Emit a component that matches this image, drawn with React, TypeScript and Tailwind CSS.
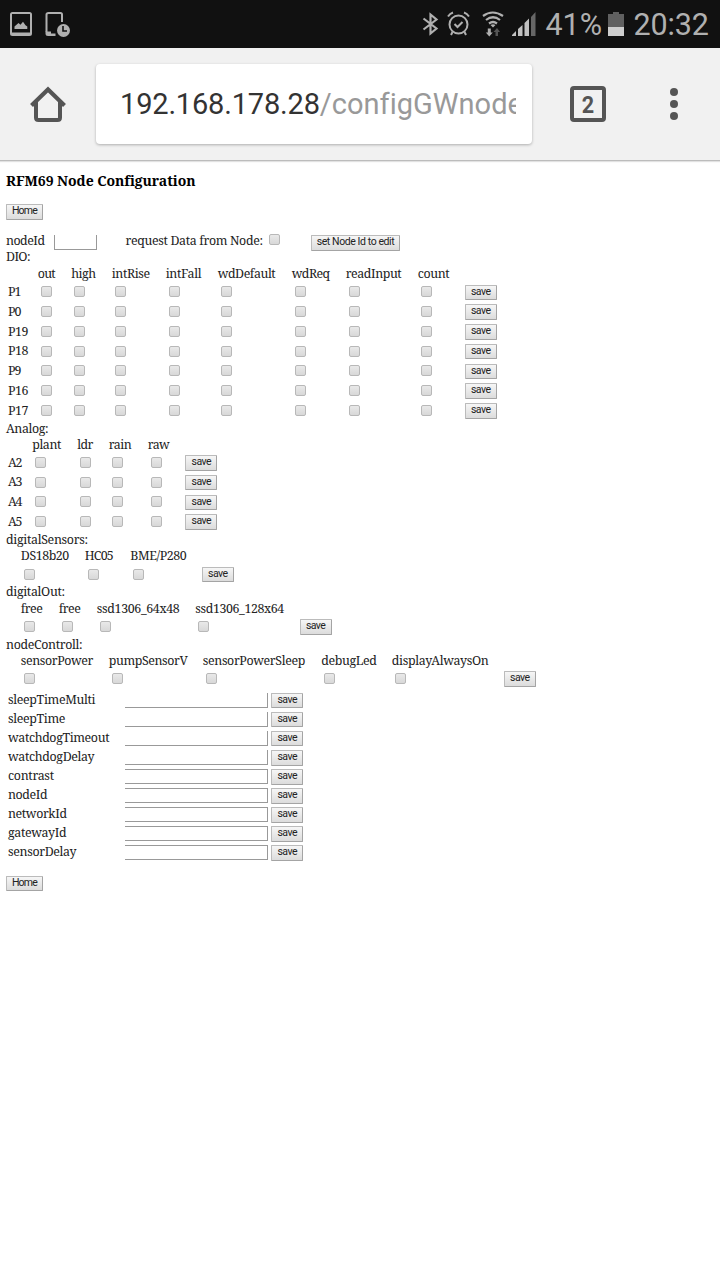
import { useLayoutEffect, useRef, useState } from "react";
import type { ReactNode } from "react";

/* Text that spreads its letters evenly to fill a given width. */
function Fit({ w, children, className = "" }: { w: number; children: string; className?: string }) {
  const ref = useRef<HTMLSpanElement>(null);
  const [spacing, setSpacing] = useState(0);
  useLayoutEffect(() => {
    if (!ref.current) return;
    const natural = ref.current.getBoundingClientRect().width - spacing * children.length;
    setSpacing((w - natural) / (children.length - 1));
  }, [w, children]);
  return (
    <span ref={ref} className={`inline-block whitespace-pre ${className}`} style={{ letterSpacing: `${spacing}px` }}>
      {children}
    </span>
  );
}

function Label({ w, children }: { w: number; children: string }) {
  return (
    <span className="block h-4 leading-4">
      <Fit w={w}>{children}</Fit>
    </span>
  );
}

function Check() {
  return (
    <input
      type="checkbox"
      className="block size-[11px] shrink-0 appearance-none rounded-[2px] border border-[#b8b8b8] bg-linear-to-b from-[#e9e9e9] to-[#d8d8d8]"
    />
  );
}

function Button({ children, className = "w-8", textWidth = 20 }: { children: string; className?: string; textWidth?: number }) {
  return (
    <button
      className={`flex h-[15.5px] shrink-0 justify-center rounded-[1px] border border-[#bbb] border-r-[#a4a4a4] border-b-[#a4a4a4] bg-linear-to-b from-[#f6f6f6] to-[#dcdcdc] font-[Roboto,sans-serif] text-[10.5px] leading-[12px] text-[#222] ${className}`}
    >
      <Fit w={textWidth}>{children}</Fit>
    </button>
  );
}

type Col = { name: string; w: number; cell: string };

const dio: Col[] = [
  { name: "out", w: 18, cell: "w-[33.5px]" },
  { name: "high", w: 25, cell: "w-[40.5px]" },
  { name: "intRise", w: 38.5, cell: "w-[54px]" },
  { name: "intFall", w: 36, cell: "w-[52px]" },
  { name: "wdDefault", w: 58, cell: "w-[74px]" },
  { name: "wdReq", w: 38.5, cell: "w-[54px]" },
  { name: "readInput", w: 56, cell: "w-[72px]" },
  { name: "count", w: 32, cell: "w-[47px]" },
];
const analog: Col[] = [
  { name: "plant", w: 29, cell: "w-[45px]" },
  { name: "ldr", w: 16, cell: "w-[31.5px]" },
  { name: "rain", w: 23, cell: "w-[39px]" },
  { name: "raw", w: 22, cell: "w-[37.5px]" },
];
const sensors: Col[] = [
  { name: "DS18b20", w: 48.5, cell: "w-[64px]" },
  { name: "HC05", w: 29, cell: "w-[45.5px]" },
  { name: "BME/P280", w: 56.5, cell: "w-[71.5px]" },
];
const outs: Col[] = [
  { name: "free", w: 22, cell: "w-[38px]" },
  { name: "free", w: 22, cell: "w-[38px]" },
  { name: "ssd1306_64x48", w: 83, cell: "w-[98.5px]" },
  { name: "ssd1306_128x64", w: 89, cell: "w-[104.3px]" },
];
const control: Col[] = [
  { name: "sensorPower", w: 72.5, cell: "w-[88px]" },
  { name: "pumpSensorV", w: 79, cell: "w-[94px]" },
  { name: "sensorPowerSleep", w: 102.5, cell: "w-[118.5px]" },
  { name: "debugLed", w: 55.5, cell: "w-[70.5px]" },
  { name: "displayAlwaysOn", w: 97, cell: "w-[112px]" },
];

const settings: [string, number][] = [
  ["sleepTimeMulti", 87.5],
  ["sleepTime", 57.5],
  ["watchdogTimeout", 101.5],
  ["watchdogDelay", 86.5],
  ["contrast", 46],
  ["nodeId", 39.5],
  ["networkId", 59],
  ["gatewayId", 58.5],
  ["sensorDelay", 68.5],
];

function Head({ cols, className }: { cols: Col[]; className: string }) {
  return (
    <div className={`flex h-4 ${className}`}>
      {cols.map((c, i) => (
        <div key={i} className={`shrink-0 ${c.cell}`}>
          <Label w={c.w}>{c.name}</Label>
        </div>
      ))}
    </div>
  );
}

function Boxes({ cols, label, labelWidth = 0, lead, height }: { cols: Col[]; label?: string; labelWidth?: number; lead: string; height: string }) {
  return (
    <div className={`flex ${height}`}>
      <div className={`shrink-0 pt-[2px] pl-2 ${lead}`}>{label && <Label w={labelWidth}>{label}</Label>}</div>
      {cols.map((c, i) => (
        <div key={i} className={`shrink-0 pt-[4.300px] pl-[3.100px] ${c.cell}`}>
          <Check />
        </div>
      ))}
      <div className="pt-[2.500px]">
        <Button>save</Button>
      </div>
    </div>
  );
}

function Section({ w, children, className = "h-4" }: { w: number; children: string; className?: string }) {
  return (
    <div className={`flex pl-1.5 ${className}`}>
      <Label w={w}>{children}</Label>
    </div>
  );
}

function Icon({ w, h, className = "", children }: { w: number; h: number; className?: string; children: ReactNode }) {
  return (
    <svg width={w} height={h} viewBox={`0 0 ${w} ${h}`} fill="none" className={`shrink-0 ${className}`}>
      {children}
    </svg>
  );
}

function StatusBar() {
  return (
    <div className="flex h-12 items-start overflow-hidden bg-[#111] font-[Roboto,sans-serif] text-[30.5px] leading-[50px] text-[#b0b0b0]">
      <Icon w={22} h={25} className="mt-[12px] ml-[10px]">
        <path fill="#b0b0b0" fillRule="evenodd" d="M2.5 0h17A2.5 2.5 0 0 1 22 2.5v19a2.5 2.5 0 0 1-2.5 2.500h-17A2.5 2.5 0 0 1 0 21.500v-19A2.5 2.5 0 0 1 2.500 0ZM2 2v18.500h18V2Z" />
        <path fill="#b0b0b0" d="M4.500 17v-2.500L8.500 11l2 1.700 2.500-3 2.500 3.500 1.800 1.300V17Z" />
      </Icon>
      <Icon w={26} h={26} className="mt-[12px] ml-[13px]">
        <path stroke="#b0b0b0" strokeWidth="2" d="M17 10V2.5Q17 1 15.500 1h-12Q1.500 1 1.500 2.500V20" />
        <path fill="#b0b0b0" d="M.5 19.500H6v2h4.500V24H3Q.5 24 .5 21.500Z" />
        <circle cx="18.500" cy="18.500" r="6.500" fill="#b0b0b0" />
        <path stroke="#111" strokeWidth="1.600" d="M18 14v5h4" />
      </Icon>
      <Icon w={18} h={26} className="mt-[11px] ml-[351px]">
        <path stroke="#b0b0b0" strokeWidth="2.200" d="m1.500 7.500 13 10-6 5V3.500l6 5-13 10" />
      </Icon>
      <Icon w={24} h={26} className="mt-[11px] ml-[7px]">
        <circle cx="11.500" cy="13.500" r="9" stroke="#b0b0b0" strokeWidth="2" />
        <path stroke="#b0b0b0" strokeWidth="2" d="m7.500 13 3 3 5-5M1 5.500Q3 2.500 6 1.500M17 1.500q3 1 5 4M5.500 21 4 24m13.500-3 1.500 3" />
      </Icon>
      <Icon w={24} h={27} className="mt-[11px] ml-[11px]">
        <path stroke="#b0b0b0" strokeWidth="2.200" d="M1 5q9.500-7 20 0M4 9q7-5.500 14 0M7 12.500q4-3 8 0" />
        <path fill="#b0b0b0" d="M8.500 14q2.500-1.500 5 0L11 16.500ZM5.800 17.500h3v4h2L7.300 25.500 3.800 21.500h2Z" />
        <path fill="#555" d="m15 17 3 4h-2v4h-2.500v-4h-2Z" />
      </Icon>
      <Icon w={24} h={24} className="mt-[12px] ml-[6px]">
        <path fill="#c0c0c0" d="M0 24v-1l4-4v5ZM6 24v-7l4.500-4v11ZM12.500 24V11L17 6.500V24Z" />
        <path fill="#666" d="M19 24V5l4.500-5v24Z" />
      </Icon>
      <div className="ml-[9.500px] w-[62.500px]">
        <Fit w={56.5}>41%</Fit>
      </div>
      <Icon w={16} h={24} className="mt-[12px]">
        <path fill="#606060" d="M0 2h5V0h6v2h5v13H0Z" />
        <path fill="#cecece" d="M0 15h16v9H0Z" />
      </Icon>
      <div className="ml-[9.500px]">
        <Fit w={75.5}>20:32</Fit>
      </div>
    </div>
  );
}

function Toolbar() {
  return (
    <div className="flex h-[113px] items-start border-b border-[#bcbcbc] bg-[#f1f1f1] shadow-[0_1px_1px_#e2e2e2]">
      <Icon w={36} h={37} className="mt-[37.500px] ml-[30px]">
        <path stroke="#555" strokeWidth="4" strokeLinejoin="round" d="M6 16v15.500q0 2.500 2.500 2.500h19q2.500 0 2.500-2.500V16" />
        <path stroke="#555" strokeWidth="4.200" d="M1.500 19.500 18 3.500l16.500 16" />
      </Icon>
      <div className="mt-4 ml-[30px] h-20 w-[436px] rounded-[4px] bg-white pl-6 shadow-[0_1px_3px_rgba(0,0,0,0.28)]">
        <div className="w-[396px] overflow-hidden font-[Roboto,sans-serif] text-[29px] leading-[80px] whitespace-nowrap text-[#333]">
          <Fit w={200}>192.168.178.28</Fit>
          <Fit w={202} className="text-[#999]">/configGWnode</Fit>
        </div>
      </div>
      <div className="mt-[38px] ml-[38px] flex h-9 w-9 items-center justify-center rounded-[4px] border-4 border-[#555] font-[Roboto,sans-serif] text-[24px] leading-none font-bold text-[#555]">
        <span className="scale-x-90 pt-0.5">2</span>
      </div>
      <Icon w={8} h={32} className="mt-10 ml-16">
        <circle cx="4" cy="4" r="4" fill="#555" />
        <circle cx="4" cy="16" r="4" fill="#555" />
        <circle cx="4" cy="28" r="4" fill="#555" />
      </Icon>
    </div>
  );
}

export default function App() {
  return (
    <div className="h-[1280px] w-[720px] overflow-hidden bg-white">
      <StatusBar />
      <Toolbar />
      <main className="pt-[9.500px] font-['Noto_Serif','DejaVu_Serif_Condensed','DejaVu_Serif',serif] text-[12.4px] text-[#222]">
        <h1 className="h-[33.500px] pl-1.5 text-[14px] leading-5 font-bold text-black">
          <Fit w={189}>RFM69 Node Configuration</Fit>
        </h1>
        <div className="h-[29px] pl-1.5">
          <Button className="w-[37px]" textWidth={26}>Home</Button>
        </div>
        <div className="flex h-4 pl-1.5">
          <div className="w-12 shrink-0">
            <Label w={39}>nodeId</Label>
          </div>
          <input className="mt-[2px] h-[15px] w-[43px] border border-t-0 border-[#999] outline-none" />
          <div className="ml-[28.500px] w-[143.500px] shrink-0">
            <Label w={137.5}>request Data from Node:</Label>
          </div>
          <div className="w-[42px] shrink-0 pt-px">
            <Check />
          </div>
          <div className="pt-[2px]">
            <Button className="w-[89px]" textWidth={78}>set Node Id to edit</Button>
          </div>
        </div>
        <Section w={24.5} className="h-[17px]">DIO:</Section>
        <Head cols={dio} className="pl-[37.700px]" />
        {["P1", "P0", "P19", "P18", "P9", "P16", "P17"].map((p) => (
          <Boxes key={p} cols={dio} label={p} labelWidth={p.length === 2 ? 13.5 : 20.5} lead="w-[37.700px]" height="h-[19.800px]" />
        ))}
        <Section w={42.5}>Analog:</Section>
        <Head cols={analog} className="pl-[32.300px]" />
        {["A2", "A3", "A4", "A5"].map((p) => (
          <Boxes key={p} cols={analog} label={p} labelWidth={14.5} lead="w-[32.300px]" height="h-[19.800px]" />
        ))}
        <Section w={82} className="h-4">digitalSensors:</Section>
        <Head cols={sensors} className="pl-[20.800px]" />
        <Boxes cols={sensors} lead="w-[20.800px]" height="h-5 pt-[0.500px]" />
        <Section w={59} className="h-[16.800px]">digitalOut:</Section>
        <Head cols={outs} className="pl-[20.800px]" />
        <Boxes cols={outs} lead="w-[20.800px]" height="h-5" />
        <Section w={76.5}>nodeControll:</Section>
        <Head cols={control} className="pl-[20.800px]" />
        <Boxes cols={control} lead="w-[20.800px]" height="h-[23px]" />
        {settings.map(([name, w], i) => (
          <div key={name} className="flex h-[19.050px] pl-2">
            <div className="w-[117px] shrink-0">
              <Label w={w}>{name}</Label>
            </div>
            <input className={`mt-px h-[15px] w-[143px] border-r border-b border-[#999] outline-none ${i > 3 ? "border-t" : ""}`} />
            <div className="mt-[1.300px] ml-[3.200px]">
              <Button>save</Button>
            </div>
          </div>
        ))}
        <div className="mt-[13px] pl-1.5">
          <Button className="w-[37px]" textWidth={26}>Home</Button>
        </div>
      </main>
    </div>
  );
}
